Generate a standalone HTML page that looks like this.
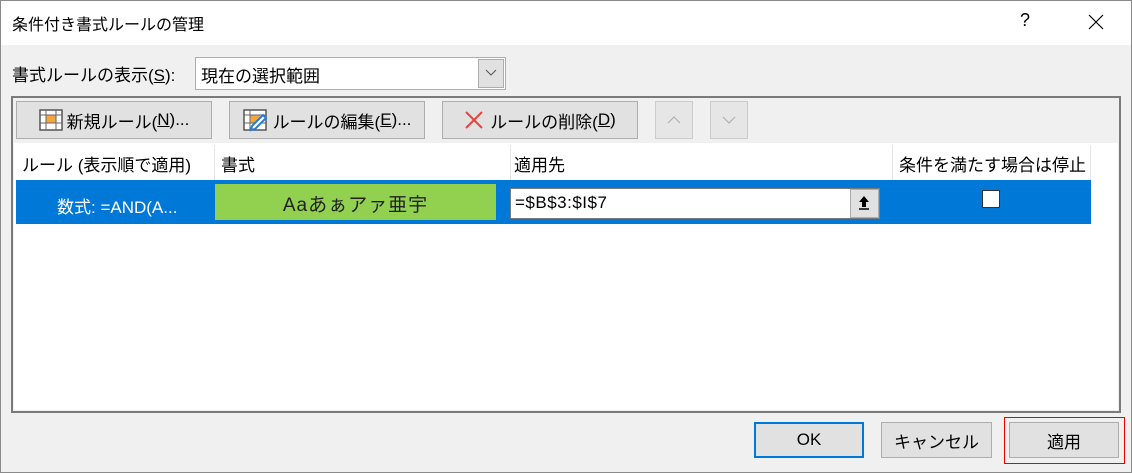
<!DOCTYPE html>
<html><head><meta charset="utf-8"><style>
*{box-sizing:border-box;margin:0;padding:0}
body{width:1132px;height:473px;background:#f0f0f0;font-family:"Liberation Sans","Noto Sans CJK JP",sans-serif;font-size:16px;color:#000;position:relative;overflow:hidden}
.a{position:absolute}
.btn{position:absolute;background:#e1e1e1;border:1px solid #adadad;display:flex;align-items:center;justify-content:center;font-size:17px}
.t{position:absolute;white-space:nowrap}
</style></head><body>
<div class="a" style="left:0;top:0;width:1132px;height:473px;border:1px solid #8a8a8a"></div>
<div class="a" style="left:1px;top:1px;width:1130px;height:44px;background:#fff"></div>
<div class="t" style="left:12px;top:11px;font-size:16px">条件付き書式ルールの管理</div>
<div class="t" style="left:1020px;top:10px;font-size:18px">?</div>
<svg class="a" style="left:1088px;top:14px" width="16" height="16"><path d="M1 1l14 14M15 1L1 15" stroke="#000" stroke-width="1.2"/></svg>

<div class="t" style="left:12px;top:61px;font-size:17px">書式ルールの表示(<u>S</u>):</div>
<div class="a" style="left:195px;top:57px;width:311px;height:33px;background:#fff;border:1px solid #adadad"></div>
<div class="t" style="left:201px;top:62px;font-size:17px">現在の選択範囲</div>
<div class="a" style="left:478px;top:59px;width:26px;height:29px;background:#e1e1e1;border:1px solid #adadad"></div>
<svg class="a" style="left:485px;top:69px" width="12" height="8"><path d="M1 1l5 5 5-5" fill="none" stroke="#555" stroke-width="1"/></svg>

<div class="a" style="left:11px;top:96px;width:1110px;height:317px;border:2px solid #7a7a7a;background:#f0f0f0"></div>
<div class="a" style="left:14px;top:143px;width:1104px;height:267px;background:#fff"></div>

<div class="btn" style="left:16px;top:101px;width:196px;height:38px"><svg width="24" height="22" style="margin-right:4px"><rect x="1" y="1" width="22" height="20" fill="#fff" stroke="#555" stroke-width="1.5"/><rect x="7" y="6" width="10" height="8" fill="#f6a63c"/><path d="M1 6h22M1 14h22M7 1v20M17 1v20" stroke="#666" stroke-width="1"/></svg>新規ルール(<u>N</u>)...</div>
<div class="btn" style="left:229px;top:101px;width:196px;height:38px"><svg width="28" height="24" style="margin-right:2px"><rect x="1" y="2" width="22" height="20" fill="#fff" stroke="#555" stroke-width="1.5"/><rect x="7" y="7" width="10" height="8" fill="#f6a63c"/><path d="M1 7h22M1 15h22M7 2v20" stroke="#666" stroke-width="1"/><path d="M8 22l1-4 11-11 3 3-11 11z" fill="#fff" stroke="#2a7ad5" stroke-width="2"/></svg>ルールの編集(<u>E</u>)...</div>
<div class="btn" style="left:442px;top:101px;width:196px;height:38px"><svg width="20" height="20" style="margin-right:6px"><path d="M2 2l16 16M18 2L2 18" stroke="#e8433a" stroke-width="2"/></svg>ルールの削除(<u>D</u>)</div>
<div class="btn" style="left:655px;top:101px;width:38px;height:38px;border-color:#ccc;background:#e6e6e6"><svg width="14" height="8"><path d="M1 7l6-6 6 6" fill="none" stroke="#aaa"/></svg></div>
<div class="btn" style="left:710px;top:101px;width:38px;height:38px;border-color:#ccc;background:#e6e6e6"><svg width="14" height="8"><path d="M1 1l6 6 6-6" fill="none" stroke="#aaa"/></svg></div>

<div class="a" style="left:214px;top:145px;width:1px;height:35px;background:#e5e5e5"></div>
<div class="a" style="left:510px;top:145px;width:1px;height:35px;background:#e5e5e5"></div>
<div class="a" style="left:892px;top:145px;width:1px;height:35px;background:#e5e5e5"></div>
<div class="a" style="left:1090px;top:145px;width:1px;height:35px;background:#e5e5e5"></div>
<div class="t" style="left:22px;top:151px;font-size:17px">ルール (表示順で適用)</div>
<div class="t" style="left:221px;top:151px;font-size:17px">書式</div>
<div class="t" style="left:514px;top:151px;font-size:17px">適用先</div>
<div class="t" style="left:899px;top:151px;font-size:17px">条件を満たす場合は停止</div>

<div class="a" style="left:16px;top:180px;width:1075px;height:44px;background:#0078d7"></div>
<div class="t" style="left:57px;top:193px;font-size:17px;color:#fff">数式: =AND(A...</div>
<div class="a" style="left:215px;top:184px;width:281px;height:36px;background:#92d050"></div>
<div class="t" style="left:215px;top:190px;width:281px;text-align:center;font-size:19px;letter-spacing:1px;color:#222">Aaあぁアァ亜宇</div>
<div class="a" style="left:510px;top:188px;width:370px;height:31px;background:#fff;border:1px solid #7a7a7a"></div>
<div class="t" style="left:515px;top:193px;font-size:17px;letter-spacing:0.5px">=$B$3:$I$7</div>
<div class="a" style="left:850px;top:189px;width:29px;height:29px;background:#e1e1e1;border:1px solid #adadad"></div>
<svg class="a" style="left:857px;top:195px" width="14" height="16"><path d="M7 1l5 6H9v5H5V7H2z" fill="#000"/><path d="M2 14h10" stroke="#000" stroke-width="1.5"/></svg>
<div class="a" style="left:982px;top:190px;width:18px;height:18px;background:#fff;border:1px solid #333"></div>

<div class="btn" style="left:754px;top:422px;width:110px;height:36px;border:2px solid #0078d7">OK</div>
<div class="btn" style="left:881px;top:422px;width:111px;height:36px">キャンセル</div>
<div class="a" style="left:1004px;top:417px;width:121px;height:47px;border:1px solid #e00"></div>
<div class="btn" style="left:1009px;top:422px;width:110px;height:36px">適用</div>
</body></html>
